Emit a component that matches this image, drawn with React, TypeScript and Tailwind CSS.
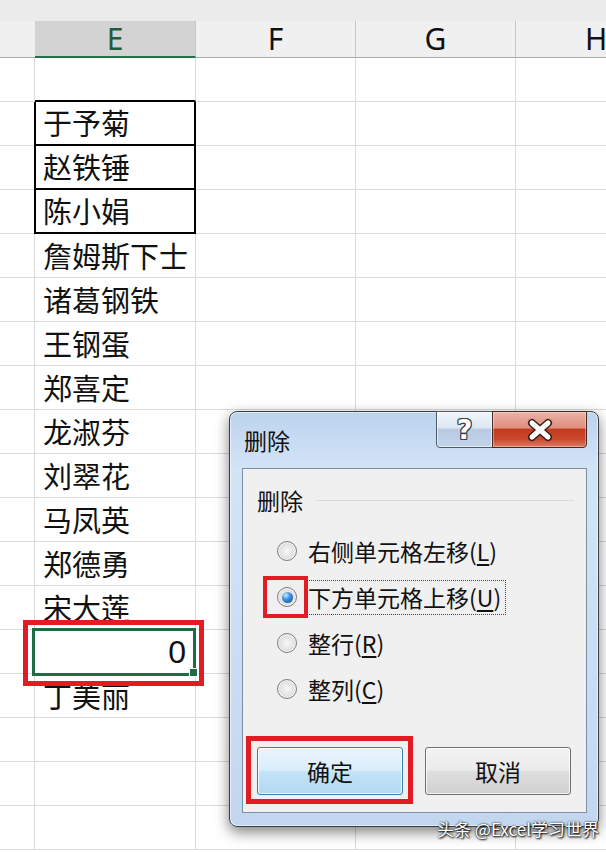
import React from "react";

const cjk = "font-['Noto_Sans_CJK_SC','Noto_Sans',sans-serif]";

const names = [
  "",
  "于予菊",
  "赵铁锤",
  "陈小娟",
  "詹姆斯下士",
  "诸葛钢铁",
  "王钢蛋",
  "郑喜定",
  "龙淑芬",
  "刘翠花",
  "马凤英",
  "郑德勇",
  "宋大莲",
  "0",
  "丁美丽",
  "",
  "",
  "",
];

function Radio({ checked }: { checked?: boolean }) {
  return (
    <span className="relative flex h-[20px] w-[20px] shrink-0 items-center justify-center rounded-full border border-[#7e7e7e] bg-[radial-gradient(circle_at_50%_50%,#f7f7f7_0%,#e2e2e2_55%,#c8c8c8_100%)] shadow-[inset_0_0_0_1px_rgba(255,255,255,0.8)]">
      {checked && (
        <span className="h-[11px] w-[11px] rounded-full bg-[radial-gradient(circle_at_35%_30%,#cdeeff_0%,#3d8fe0_40%,#0b4693_100%)]" />
      )}
    </span>
  );
}

function Accel({ text, k }: { text: string; k: string }) {
  return (
    <>
      {text}(<span className="underline underline-offset-[3px]">{k}</span>)
    </>
  );
}

function SheetRow({ name, index }: { name: string; index: number }) {
  const boxed = index >= 1 && index <= 3;
  const topOfBox = index === 0;
  const selected = name === "0";

  return (
    <div className="flex h-[44px] shrink-0">
      <div className="w-[35px] shrink-0 border-r border-b border-[#dadada]" />
      {boxed ? (
        <div className="-ml-px flex w-[162px] shrink-0 items-center border-x-2 border-b-2 border-black pl-[7px] text-[29px] text-[#111]">
          <span className={cjk}>{name}</span>
        </div>
      ) : selected ? (
        <div className="relative z-10 flex w-[161px] shrink-0 items-center justify-end border-r border-b border-[#dadada] pr-[9px]">
          <span className="font-['Liberation_Sans',sans-serif] text-[32px] leading-none text-[#111]">0</span>
          <div className="absolute -top-[2px] -right-px -bottom-[3px] -left-[3px] border-[3px] border-[#1f6b43]" />
          <div className="absolute -right-[3px] -bottom-[4px] h-[9px] w-[9px] border border-white bg-[#1f6b43]" />
          <div className="absolute -top-[10px] -right-[9px] -bottom-[13px] -left-[12px] border-[5px] border-[#e31b23]" />
        </div>
      ) : (
        <div
          className={
            topOfBox
              ? "flex w-[161px] shrink-0 items-center border-r border-b-2 border-r-[#dadada] border-b-black pl-[8px]"
              : "flex w-[161px] shrink-0 items-center border-r border-b border-[#dadada] pl-[8px] text-[29px] text-[#111]"
          }
        >
          <span className={cjk}>{name}</span>
        </div>
      )}
      <div className="w-[160px] shrink-0 border-r border-b border-[#dadada]" />
      <div className="w-[160px] shrink-0 border-r border-b border-[#dadada]" />
      <div className="w-[160px] shrink-0 border-b border-[#dadada]" />
    </div>
  );
}

function DeleteDialog() {
  return (
    <div className="absolute top-[411px] left-[229px] z-20 flex h-[416px] w-[370px] flex-col rounded-[8px] border border-[#3a3f46] bg-[linear-gradient(180deg,#bcd3ee_0%,#d3e4f6_14%,#cbddf2_60%,#c2d7ef_100%)] shadow-[0_5px_14px_rgba(0,0,0,0.5),inset_0_0_0_1px_rgba(255,255,255,0.55)]">
      {/* title bar */}
      <div className="flex h-[56px] shrink-0">
        <div className={`flex-1 pt-[11px] pl-[14px] text-[23px] leading-[34px] text-[#111] ${cjk}`}>删除</div>
        <div className="-mt-px mr-[11px] flex h-[37px]">
          <div className="flex w-[57px] items-center justify-center rounded-bl-[4px] border border-[#4f5a67] bg-[linear-gradient(180deg,#f1f5fb_0%,#dde7f3_45%,#b8cbe2_50%,#c2d4ea_100%)] shadow-[inset_0_0_0_1px_rgba(255,255,255,0.6)]">
            <span className="font-['DejaVu_Sans',sans-serif] text-[27px] leading-none font-bold text-white [text-shadow:-1px_0_0_#33404e,1px_0_0_#33404e,0_-1px_0_#33404e,0_1px_0_#33404e,1px_1px_0_#33404e,-1px_-1px_0_#33404e,1px_-1px_0_#33404e,-1px_1px_0_#33404e]">
              ?
            </span>
          </div>
          <div className="-ml-px flex w-[95px] items-center justify-center rounded-br-[4px] border border-[#4a2620] bg-[linear-gradient(180deg,#ebb3a7_0%,#df8f7e_45%,#c53b20_50%,#c84a2e_78%,#dc7a5f_100%)] shadow-[inset_0_0_0_1px_rgba(255,255,255,0.35)]">
            <svg width="30" height="24" viewBox="0 0 30 24">
              <path d="M7 5 L23 19 M23 5 L7 19" stroke="#3b1d18" strokeWidth="8" strokeLinecap="round" />
              <path d="M7 5 L23 19 M23 5 L7 19" stroke="#ffffff" strokeWidth="5" strokeLinecap="round" />
            </svg>
          </div>
        </div>
      </div>

      {/* client area */}
      <div className={`mr-[11px] ml-[12px] flex h-[345px] flex-col border border-[#7d8ea4] bg-[#f0f0f0] text-[23px] text-[#111] ${cjk}`}>
        <div className="mt-[16px] flex h-[30px] items-center pl-[14px]">
          <span>删除</span>
          <div className="mr-[12px] ml-[13px] h-px flex-1 bg-[#d3dbe3]" />
        </div>

        <div className="mt-[13px] flex flex-col">
          <div className="flex h-[46px] items-center gap-[11px] pl-[34px]">
            <Radio />
            <span className="leading-[33px]">
              <Accel text="右侧单元格左移" k="L" />
            </span>
          </div>
          <div className="relative flex h-[46px] items-center gap-[10px] pl-[34px]">
            <Radio checked />
            <span className="border border-dotted border-[#444] pr-[4px] leading-[33px]">
              <Accel text="下方单元格上移" k="U" />
            </span>
            <div className="absolute top-[2px] left-[20px] h-[42px] w-[45px] border-4 border-[#e31b23]" />
          </div>
          <div className="flex h-[46px] items-center gap-[11px] pl-[34px]">
            <Radio />
            <span className="leading-[33px]">
              <Accel text="整行" k="R" />
            </span>
          </div>
          <div className="flex h-[46px] items-center gap-[11px] pl-[34px]">
            <Radio />
            <span className="leading-[33px]">
              <Accel text="整列" k="C" />
            </span>
          </div>
        </div>

        <div className="mt-[35px] flex gap-[22px] pl-[14px]">
          <div className="relative">
            <button className="flex h-[48px] w-[146px] items-center justify-center rounded-[3px] border border-[#3c7fb1] bg-[linear-gradient(180deg,#eaf5fc_0%,#d9eefb_48%,#c3e3f7_52%,#b3d9f2_100%)] shadow-[inset_0_0_0_1px_rgba(255,255,255,0.75)]">
              确定
            </button>
            <div className="absolute -top-[11px] -right-[10px] -bottom-[9px] -left-[11px] border-[5px] border-[#e31b23]" />
          </div>
          <button className="flex h-[48px] w-[146px] items-center justify-center rounded-[3px] border border-[#707070] bg-[linear-gradient(180deg,#f3f3f3_0%,#ebebeb_48%,#dedede_52%,#d0d0d0_100%)] shadow-[inset_0_0_0_1px_rgba(255,255,255,0.75)]">
            取消
          </button>
        </div>
      </div>
    </div>
  );
}

export default function App() {
  return (
    <div className="relative h-[852px] w-[606px] overflow-hidden bg-white">
      {/* top strip */}
      <div className="h-[21px] bg-[#ebebeb]" />

      {/* column headers */}
      <div className="flex h-[37px] bg-[#f0f0f0] font-['Noto_Sans',sans-serif] text-[30px] leading-none">
        <div className="w-[35px] shrink-0 border-b border-[#ababab]" />
        <div className="flex w-[161px] shrink-0 items-center justify-center border-r border-b-2 border-r-[#c6c6c6] border-b-[#217346] bg-[#d3d3d3] text-[#1e5c3a]">
          E
        </div>
        <div className="flex w-[160px] shrink-0 items-center justify-center border-r border-b border-r-[#c6c6c6] border-b-[#ababab] text-[#111]">
          F
        </div>
        <div className="flex w-[160px] shrink-0 items-center justify-center border-r border-b border-r-[#c6c6c6] border-b-[#ababab] text-[#111]">
          G
        </div>
        <div className="flex w-[160px] shrink-0 items-center justify-center border-b border-[#ababab] text-[#111]">
          H
        </div>
      </div>

      {/* grid */}
      <div className="flex flex-col">
        {names.map((n, i) => (
          <SheetRow key={i} name={n} index={i} />
        ))}
      </div>

      <DeleteDialog />

      <div className={`absolute top-[818px] left-[437px] z-30 text-[17px] leading-[22px] text-white [text-shadow:0_0_2px_#000,1px_1px_2px_#000] ${cjk}`}>
        头条 @Excel学习世界
      </div>
    </div>
  );
}
